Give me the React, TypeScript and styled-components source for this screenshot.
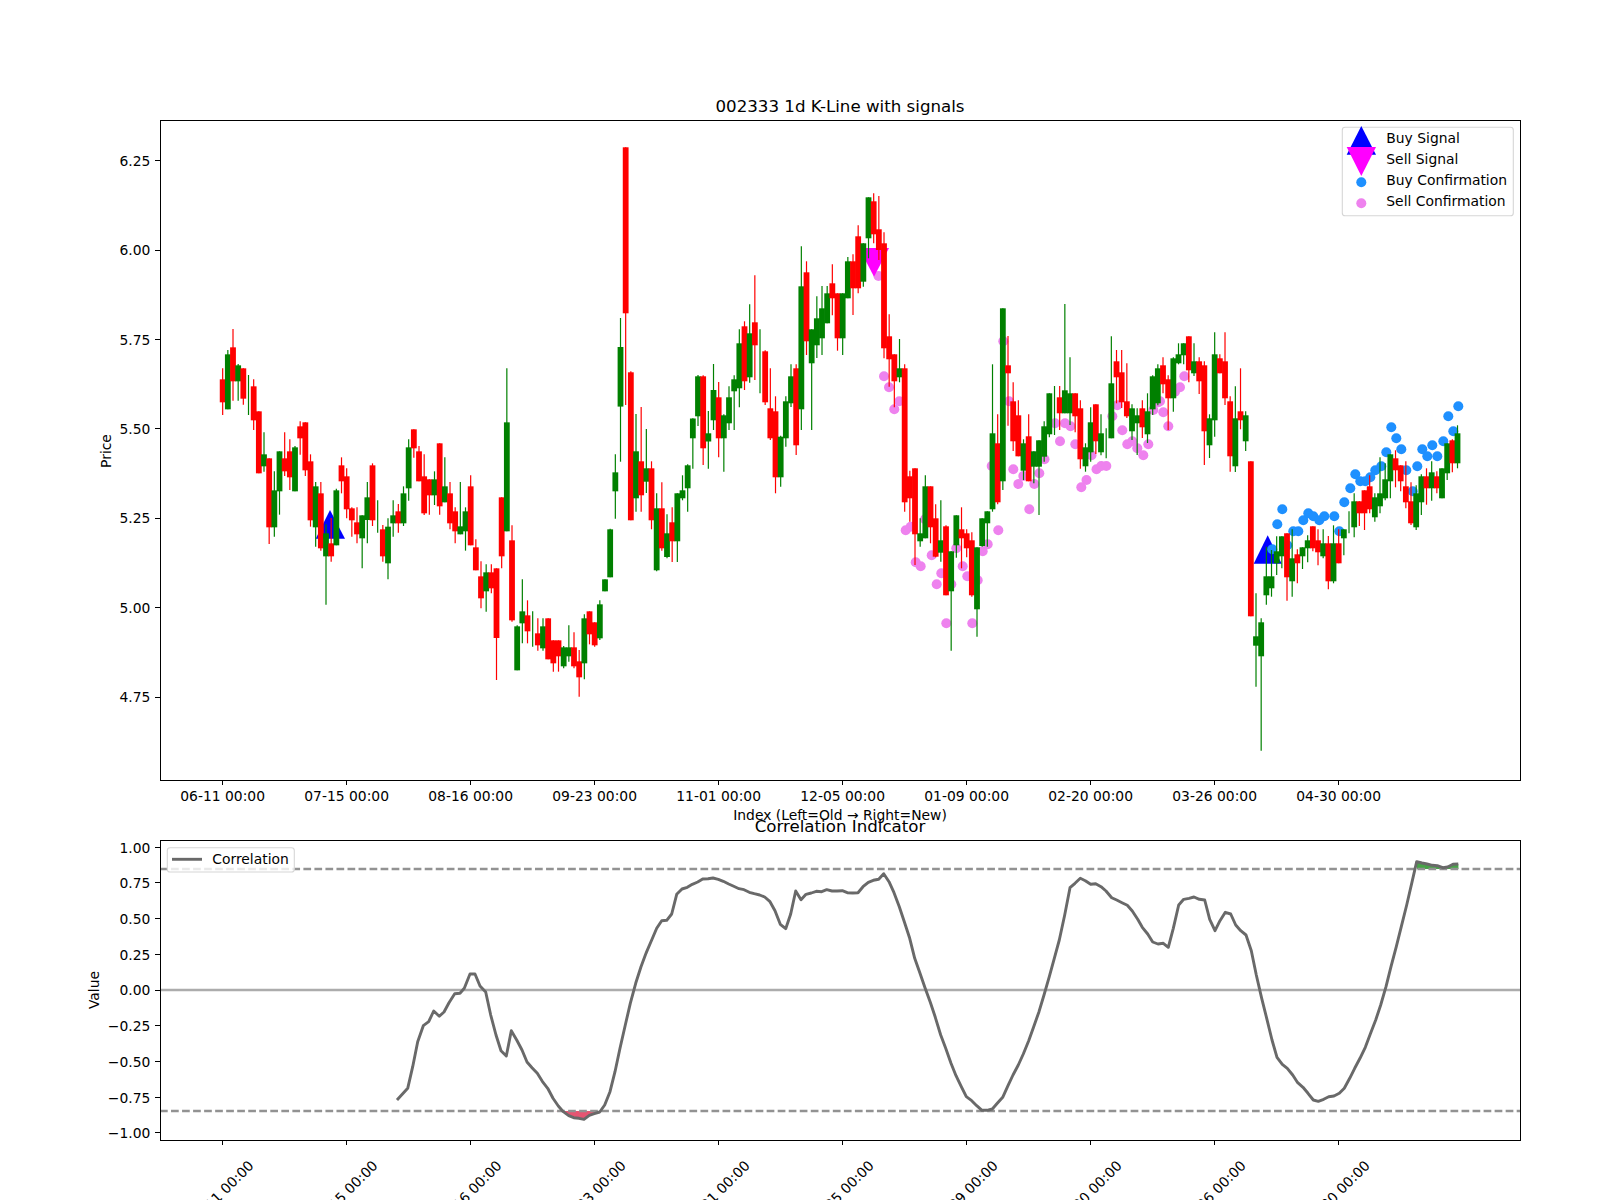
import styled, { createGlobalStyle } from "styled-components";

type Pt = [number, number];
type Row = ["r" | "g", number, number, number, number];

// everything below is in figure pixels (1600x1200)
const AX = { left: 160, right: 1520, top: 120, bottom: 780 };
const BX = { left: 160, right: 1520, top: 840, bottom: 1140 };
const xAt = (i: number) => 222.67 + 5.1667 * i;
const priceY = (p: number) => 697 - (p - 4.75) * 357.5;
const corrY = (v: number) => 990 - v * 142.9;
const snap = (n: number) => Math.floor(n) + 0.5;

const DATES = ["06-11", "07-15", "08-16", "09-23", "11-01", "12-05", "01-09", "02-20", "03-26", "04-30"];
const TICK_X = DATES.map((_, i) => xAt(i * 24));

// rows read at 3x, [colour, body top, body bottom, wick top, wick bottom]
const at3x = (base: number, rows: Row[]): Row[] =>
  rows.map(([c, a, b, d, e]) => [c, base + a / 3, base + b / 3, base + d / 3, base + e / 3]);
const crop = (ox: number, oy: number, pts: Pt[]): Pt[] => pts.map(([x, y]) => [ox + x / 3, oy + y / 3]);

const CANDLES: Row[] = [
  ...at3x(300, [
    ["r", 238, 307, 205, 345], ["g", 163, 328, 150, 328], ["r", 142, 244, 87, 302], ["g", 196, 244, 192, 302],
    ["r", 205, 296, 205, 314], ["g", 270, 270, 225, 345], ["r", 259, 361, 238, 390], ["r", 334, 520, 334, 520],
    ["g", 463, 499, 397, 515], ["r", 475, 682, 475, 732], ["g", 571, 682, 514, 710], ["g", 454, 574, 454, 644],
    ["r", 475, 514, 397, 528], ["r", 454, 532, 418, 570], ["g", 442, 574, 438, 574], ["r", 379, 415, 364, 464],
    ["r", 367, 511, 367, 528], ["r", 484, 661, 463, 680], ["g", 559, 682, 546, 740], ["r", 580, 745, 546, 752],
    ["g", 700, 769, 673, 914], ["r", 730, 769, 654, 785], ["g", 571, 736, 566, 736], ["r", 496, 544, 472, 580],
    ["r", 529, 628, 505, 655], ["r", 625, 661, 622, 710], ["r", 667, 703, 622, 730], ["g", 646, 715, 646, 805],
    ["g", 592, 660, 546, 730], ["r", 496, 661, 490, 678], ["g", 650, 650, 601, 698], ["r", 688, 769, 675, 785],
    ["g", 680, 790, 655, 838], ["g", 646, 670, 601, 710], ["r", 634, 670, 612, 698], ["g", 580, 670, 559, 678],
    ["g", 442, 565, 418, 602], ["r", 388, 445, 388, 473], ["r", 454, 544, 438, 544], ["r", 529, 640, 463, 645],
    ["r", 538, 586, 538, 644], ["g", 538, 586, 514, 615], ["r", 430, 619, 430, 644], ["g", 559, 607, 472, 607],
    ["r", 580, 670, 546, 688], ["r", 634, 694, 622, 730], ["g", 679, 703, 546, 703], ["g", 634, 694, 622, 752],
    ["r", 559, 736, 526, 736], ["r", 742, 811, 718, 811], ["r", 829, 895, 784, 925], ["g", 817, 874, 793, 935],
    ["r", 817, 865, 793, 880], ["r", 805, 1014, 805, 1140], ["r", 592, 769, 592, 805], ["g", 367, 694, 205, 694],
  ]),
  ...at3x(400, [
    ["r", 421, 661, 376, 665], ["g", 679, 811, 676, 811], ["g", 634, 670, 538, 730], ["r", 646, 694, 601, 730],
    ["g", 685, 685, 634, 740], ["r", 700, 736, 655, 752], ["g", 679, 745, 655, 752], ["r", 655, 778, 655, 778],
    ["r", 721, 790, 721, 815], ["r", 721, 769, 721, 815], ["g", 742, 799, 738, 805], ["g", 742, 769, 676, 785],
    ["r", 742, 799, 697, 805], ["r", 784, 832, 750, 890], ["g", 655, 790, 643, 838], ["r", 634, 703, 634, 733],
    ["r", 667, 736, 667, 740], ["g", 613, 715, 601, 720], ["g", 538, 574, 538, 574], ["g", 388, 532, 386, 532],
    ["g", 217, 274, 163, 356],
  ]),
  ["g", 347, 406.6, 318, 461.7], ["r", 147.3, 313.3, 147.3, 405], ["r", 372.3, 520.3, 371.3, 520.3],
  ["g", 451.3, 498.3, 414, 511.7], ["r", 461.3, 495.3, 407, 511.7], ["g", 468.3, 481.7, 429, 493],
  ["r", 468.3, 520.3, 461.3, 529.3], ["g", 508.3, 570.3, 493.3, 571.3], ["r", 508.3, 548.3, 482.3, 550.7],
  ["g", 533.3, 557, 514.3, 558.3], ["r", 522.3, 541.3, 507.3, 562], ["g", 493.3, 541.3, 493.3, 562],
  ["g", 490.3, 498.3, 475.3, 500.3], ["g", 465.3, 488.3, 464.3, 511.7], ["g", 418.5, 438.3, 418.3, 468.7],
  ["g", 376.3, 416.3, 375, 426], ["r", 376.3, 448.3, 375.3, 465], ["g", 433.3, 441.5, 411, 468.7],
  ["g", 390, 420.3, 364, 430], ["r", 397.3, 438.3, 382, 457.3], ["g", 415.3, 438.3, 414.3, 471.7],
  ["g", 397.3, 423.3, 386.3, 430], ["g", 379.3, 391.3, 375.3, 430], ["g", 343.3, 388.3, 329.3, 407.3],
  ["r", 326.3, 381.3, 321.3, 390], ["g", 333.3, 377.3, 304.3, 382.7], ["r", 322.3, 345.3, 275.3, 380],
  ["g", 360, 360, 329.3, 393.3], ["r", 351.3, 402.3, 350.3, 405], ["r", 408.3, 438.3, 368.3, 440],
  ["r", 411.3, 477.3, 396.3, 493.3], ["g", 436.7, 477.3, 435.7, 486.7], ["g", 401.3, 438.3, 396.3, 446.7],
  ["g", 376.3, 403.3, 364.3, 407], ["r", 368.3, 445.3, 364.3, 455], ["g", 286.3, 409.3, 246.3, 430],
  ["r", 272.3, 341.3, 261.3, 355], ["g", 329.3, 363.3, 329.3, 430], ["g", 318.3, 345.3, 296.3, 358],
  ["g", 308.3, 338.3, 286, 355], ["g", 293.3, 323.3, 286, 323.3], ["r", 283.3, 298.3, 264.3, 315.3],
  ["r", 293.3, 338.3, 293.3, 350.7], ["g", 293.3, 338.3, 293.3, 355], ["g", 261.3, 298.3, 257, 298.3],
  ["r", 261.3, 288.3, 254.3, 315], ["r", 236.3, 288.3, 225.3, 293.3], ["g", 243.3, 281.7, 243.3, 286.7],
  ["g", 197.3, 238.3, 197.3, 258.3], ["r", 201.3, 234.3, 193.3, 243.3], ["r", 229.3, 250, 196, 260],
  ["r", 243.3, 348.3, 232.3, 358.3], ["r", 336.3, 359.3, 314.3, 386.7], ["r", 354.3, 381.3, 354.3, 407.3],
  ["g", 368.3, 377.3, 339, 382.3], ["r", 368.3, 502.3, 364.3, 511.7], ["r", 476.3, 498.3, 470.7, 521.7],
  ["r", 468.3, 534.3, 468.3, 565], ["g", 533.3, 541.3, 518.3, 546.7], ["g", 486.3, 538.3, 475.3, 538.3],
  ["r", 486.3, 527.3, 486.3, 543.3], ["r", 518.3, 556.7, 504.3, 557.3], ["g", 540.3, 552.7, 500.3, 561.7],
  ["r", 526.3, 595.3, 525.3, 595.3], ["g", 551.3, 591.3, 551.3, 650.7], ["g", 515.3, 545.3, 515.3, 557.7],
  ["r", 529.3, 538.3, 507.3, 568.3], ["r", 533.3, 548.3, 529.3, 557.3], ["r", 540.3, 595.3, 532.3, 596.7],
  ["g", 547.3, 609.3, 547.3, 636.7], ["g", 518.3, 546, 518.3, 546.7], ["g", 511.3, 523.3, 511.3, 546.7],
  ["g", 433.3, 509.3, 364.3, 511.7], ["r", 443.3, 502.3, 414.3, 504.3], ["g", 308.3, 481.3, 308.3, 490],
  ["r", 365.3, 373.3, 336, 425.7], ["r", 401.3, 441.3, 382.3, 451], ["r", 415.3, 456.3, 400.3, 456.3],
  ["g", 443.3, 470.7, 439.3, 480], ["r", 436.3, 481.3, 414.3, 481.3], ["g", 451.3, 466.7, 451.3, 483.3],
  ["g", 440.3, 466.7, 440.3, 515], ["g", 426.3, 456.7, 421.3, 461.7], ["g", 393.3, 434.3, 393.3, 437.3],
  ["g", 410, 410, 386, 435], ["r", 397.3, 413.3, 386, 430], ["g", 390.3, 413.3, 304, 413.3],
  ["g", 393.3, 413.3, 357.3, 425], ["r", 393.3, 416.3, 393.3, 432.3], ["r", 408.3, 459.3, 400.3, 468.7],
  ["g", 447.3, 466.3, 443.3, 471.7], ["g", 422.3, 452.3, 407.3, 461.7], ["r", 404.3, 441.3, 404.3, 454],
  ["g", 433.3, 452.3, 414.3, 455.3], ["g", 440, 440, 428.3, 458.3], ["g", 383.3, 438.3, 336.3, 438.3],
  ["r", 361.3, 377.3, 350, 403.3], ["r", 372.3, 402.3, 350, 408], ["r", 401.3, 416.3, 363.3, 418],
  ["g", 408.3, 431.3, 404.3, 440], ["g", 415.3, 423.3, 408.3, 455], ["r", 408.3, 427.3, 400.3, 438],
  ["g", 411.3, 434.3, 393.3, 443], ["g", 376.3, 409.3, 375.3, 415], ["g", 368.3, 403.3, 364.3, 405.3],
  ["r", 365.3, 384.3, 357.3, 393.3], ["r", 379.3, 398.3, 375.3, 430], ["g", 358.3, 398.3, 357.3, 411.7],
  ["g", 354.3, 363.3, 343.3, 364.3], ["g", 343.3, 355.3, 343.3, 364.3], ["r", 336.3, 370.3, 336.3, 382.3],
  ["g", 361.3, 373.3, 343.3, 376], ["r", 361.3, 381.3, 357.3, 394], ["r", 365.3, 431.3, 361.3, 465],
  ["g", 418.3, 445.3, 414.3, 458], ["g", 354.3, 420.3, 332.3, 436.7], ["r", 358.3, 373.3, 354.3, 373.3],
  ["r", 361.3, 398.3, 332.3, 405], ["r", 401.3, 456.3, 396.3, 471.7], ["g", 418.3, 466.3, 386.3, 472],
  ["r", 411.3, 420.3, 368.3, 429.3], ["g", 415.3, 441.3, 411.3, 451], ["r", 461.3, 616.3, 461.3, 616.3],
  ["g", 636.3, 645.7, 593.3, 686.7], ["g", 622.3, 656.3, 618.3, 750.7], ["g", 576.3, 595.3, 546.7, 604.7],
  ["g", 576.3, 588.3, 550, 596.7], ["g", 551.3, 563.3, 536.3, 575], ["g", 536.3, 556.3, 536.3, 568.3],
  ["r", 533.3, 577.3, 533.3, 600.7], ["g", 558.3, 581.3, 529.3, 596.7], ["r", 554.3, 563.3, 549.3, 583.3],
  ["g", 547.3, 556.3, 547.3, 569], ["g", 540.3, 548.3, 535.3, 562.3], ["r", 526.3, 548.3, 526.3, 551.3],
  ["r", 540.3, 552.3, 529.3, 565.3], ["g", 543.3, 556.3, 529.3, 558.3], ["r", 543.3, 581.3, 536, 589.3],
  ["g", 543.3, 581.3, 525.3, 583.3], ["r", 543.3, 563.3, 529.3, 563.3], ["g", 529.3, 538.3, 529.3, 555.3],
  ["g", 522, 522, 511.3, 533.3], ["g", 501.3, 527.3, 493.3, 537.3], ["r", 501.3, 513.3, 501.3, 526],
  ["r", 490.3, 513.3, 490.3, 530], ["r", 486.3, 509.3, 475.3, 513.3], ["g", 497.3, 517.3, 493.3, 521.7],
  ["g", 493.3, 506.3, 457.3, 513.3], ["g", 479.3, 498.3, 463.3, 500.3], ["g", 454.3, 481.3, 454.3, 498.3],
  ["r", 458.3, 470.3, 450.3, 487.3], ["r", 465.3, 481.3, 465.3, 491.3], ["r", 486.3, 502.3, 461.3, 508.3],
  ["r", 501.3, 523.3, 482.3, 525], ["g", 493.3, 527.3, 485.3, 530], ["g", 476.3, 502.3, 474.3, 515],
  ["r", 476.3, 488.3, 468.3, 504.7], ["g", 472.3, 488.3, 461.3, 500.7], ["r", 476.3, 488.3, 471.3, 493.3],
  ["g", 468.3, 498.3, 468.3, 498.3], ["g", 443.3, 473.3, 443.3, 480], ["r", 440.3, 463.3, 439.3, 472.3],
  ["g", 433.3, 463.3, 425.3, 468.3],
];

const SELL_DOTS: Pt[] = [
  [884, 376.3], [889, 387.3], [894.3, 409.3], [899.3, 401.3], [878.5, 276], [905.7, 530.3], [910.7, 526.7],
  [915.7, 562.3], [920.7, 566.3], [925, 519.3], [931.7, 555.3], [936.7, 584.3], [941.3, 573.3], [946.3, 623.3],
  [951.3, 584.3], [956.3, 548.3], [962.7, 566.3], [967.3, 576.3], [972.3, 623.3], [977.7, 580.3], [982.7, 551.3],
  [987.7, 544.3], [991.7, 466], [998.3, 530.3], [1003.3, 341.3], [1009, 401.3], [1013.3, 469.3], [1018.3, 484],
  [1023.3, 476], [1029.3, 509.3], [1034.3, 484], [1039.3, 473.3], [1044.5, 459.3], [1055, 423.3], [1060, 441.3],
  [1065, 423.3], [1070.5, 426.3], [1075.3, 444.3], [1081.3, 487.3], [1086.5, 480], [1091.5, 455.3], [1096.5, 469.3],
  [1101.3, 466], [1106.3, 466], [1112.3, 416.3], [1117.3, 405.3], [1122.3, 430.3], [1127.3, 444.3], [1132.3, 441.3],
  [1137.3, 448.3], [1143.3, 455.3], [1148.3, 444.3], [1153.3, 410], [1158.3, 402.3], [1160, 401.3], [1163.3, 412.3],
  [1168.3, 426.3], [1175, 391.7], [1180, 387.3], [1184.3, 376.3],
];

const BUY_DOTS: Pt[] = [
  [1272.3, 549.3], [1277.3, 524.3], [1282.3, 509.3], [1287.3, 545.3], [1293.3, 531.3], [1298.3, 531.3],
  [1303.3, 520.3], [1308.3, 513.3], [1313.3, 516.3], [1319.3, 520.3], [1324.3, 516.3], [1334.3, 516.3],
  [1339.3, 531.3], [1344.3, 502.3], [1350.3, 488.3], [1355.3, 474.3], [1360.3, 481.3], [1365.3, 481.3],
  [1370.3, 477.3], [1375.3, 470.3], [1381.3, 466.3], [1386.3, 452.3], [1391.3, 427.3], [1396.3, 438.3],
  [1401.3, 449.3], [1406.3, 470.3], [1412.7, 491.3], [1417.3, 466.3], [1422.3, 449.3], [1427.3, 456.3],
  [1432.3, 445.3], [1437.3, 456.3], [1443.3, 441.3], [1448.3, 416.3], [1453.3, 431.3], [1458.3, 406.3],
];

const CORR_LINE: Pt[] = [
  ...crop(150, 770, [
    [741, 990], [773, 955], [788, 890], [803, 815], [820, 767], [836, 755], [851, 723], [868, 739], [882, 726],
    [897, 698], [914, 671], [930, 670], [943, 655], [960, 612], [975, 612], [990, 648], [1007, 666], [1022, 735],
    [1038, 795], [1053, 842], [1069, 858], [1084, 782], [1100, 810], [1116, 840], [1131, 876], [1146, 893],
    [1162, 910], [1177, 934], [1193, 955], [1209, 985], [1225, 1008], [1240, 1025], [1256, 1037], [1271, 1043],
    [1287, 1045], [1302, 1048], [1318, 1036], [1333, 1031], [1349, 1026], [1364, 1005], [1380, 965], [1395, 905],
    [1410, 835], [1426, 765], [1441, 700], [1457, 640], [1473, 590], [1488, 550],
  ]),
  ...crop(640, 800, [
    [20, 455], [35, 420], [50, 385], [65, 362], [80, 361], [95, 342], [110, 283], [126, 267], [142, 262], [157, 253],
    [173, 246], [188, 237], [204, 236], [219, 234], [235, 238], [250, 244], [266, 252], [281, 259], [297, 266],
    [312, 269], [328, 277], [343, 281], [359, 285], [374, 291], [390, 305], [405, 332], [421, 373], [437, 386],
    [452, 342], [467, 273], [483, 299], [498, 283], [514, 279], [529, 274], [545, 275], [560, 269], [576, 273],
    [591, 273], [607, 272], [622, 278], [638, 279], [654, 278], [669, 260], [685, 247], [700, 241], [716, 238],
    [731, 221], [747, 245], [762, 278], [778, 320], [793, 365], [809, 415], [824, 475], [840, 520], [855, 563],
    [871, 607], [886, 652], [902, 705], [917, 745], [933, 790], [948, 827], [964, 860], [979, 890], [995, 902],
    [1010, 917], [1026, 931], [1041, 931], [1057, 927], [1072, 910], [1088, 892], [1104, 857], [1119, 825],
    [1135, 795], [1150, 762], [1166, 722], [1181, 680], [1197, 635], [1212, 585], [1228, 530], [1243, 475],
    [1258, 420], [1274, 345], [1290, 263], [1305, 250], [1321, 235], [1336, 242], [1352, 253], [1367, 251],
    [1383, 260],
  ]),
  ...crop(1100, 830, [
    [18, 183], [35, 203], [50, 210], [66, 218], [82, 226], [97, 243], [113, 268], [127, 292], [143, 312], [158, 336],
    [174, 342], [190, 340], [205, 352], [220, 295], [236, 225], [251, 208], [267, 205], [282, 201], [298, 208],
    [314, 210], [329, 268], [345, 302], [360, 272], [376, 247], [392, 252], [407, 285], [422, 302], [438, 315],
    [454, 362], [469, 435], [485, 505], [500, 565], [516, 630], [531, 682], [547, 703], [562, 715], [578, 735],
    [593, 758], [609, 772], [624, 790], [640, 810], [655, 814], [671, 808], [686, 800], [702, 798], [718, 790],
    [733, 775], [749, 745], [764, 715], [780, 685], [796, 652], [811, 612], [827, 570], [842, 525], [858, 470],
    [873, 410], [889, 350], [904, 290], [920, 225], [935, 160], [950, 95], [966, 99], [981, 102], [997, 106],
    [1012, 107], [1028, 113], [1043, 111], [1059, 103], [1075, 102],
  ]),
];

const points = (pts: Pt[]) => pts.map(([x, y]) => `${x.toFixed(1)},${y.toFixed(1)}`).join(" ");

const UPPER_Y = 869;
const LOWER_Y = 1111;
const OVERSOLD = CORR_LINE.filter(([x, y]) => y > LOWER_Y && x > 500 && x < 620);
const OVERBOUGHT = CORR_LINE.filter(([x, y]) => y < UPPER_Y && x > 1400);

const GlobalStyle = createGlobalStyle`
  html, body {
    margin: 0;
    background: #fff;
  }
`;

const Figure = styled.div`
  display: grid;
  grid-template-rows: 822px 378px;
  width: 1600px;
  height: 1200px;
  overflow: hidden;
  background: #fff;
`;

const PlotSvg = styled.svg`
  display: block;
  width: 1600px;
  height: 100%;
  overflow: visible;
`;

const Label = styled.text<{ $size?: number }>`
  font-family: "DejaVu Sans", "Liberation Sans", sans-serif;
  font-size: ${(p) => p.$size ?? 13.89}px;
  fill: #000;
`;

const Spine = styled.rect`
  fill: none;
  stroke: #000;
  stroke-width: 1;
  shape-rendering: crispEdges;
`;

const Tick = styled.line`
  stroke: #000;
  stroke-width: 1;
  shape-rendering: crispEdges;
`;

const Wick = styled.line<{ $up: boolean }>`
  stroke: ${(p) => (p.$up ? "#ff0000" : "#008000")};
  stroke-width: 1.2;
`;

const Body = styled.rect<{ $up: boolean }>`
  fill: ${(p) => (p.$up ? "#ff0000" : "#008000")};
`;

const Dot = styled.circle<{ $buy?: boolean }>`
  fill: ${(p) => (p.$buy ? "#1e90ff" : "#ee82ee")};
`;

const Marker = styled.polygon<{ $buy?: boolean }>`
  fill: ${(p) => (p.$buy ? "#0000ff" : "#ff00ff")};
`;

const LegendBox = styled.rect`
  fill: #fff;
  fill-opacity: 0.8;
  stroke: #d6d6d6;
  stroke-width: 1.11;
`;

const CorrLine = styled.polyline`
  fill: none;
  stroke: #696969;
  stroke-width: 2.9;
  stroke-linejoin: round;
`;

const ZeroLine = styled.line`
  stroke: #acacac;
  stroke-width: 2.3;
`;

const LevelLine = styled.line`
  stroke: #929292;
  stroke-width: 2.3;
  stroke-dasharray: 7.7 3.33;
`;

const ZoneFill = styled.polygon<{ $color: string }>`
  fill: ${(p) => p.$color};
  fill-opacity: 0.72;
`;

function KLineChart() {
  return (
    <PlotSvg viewBox="0 0 1600 822">
      <Label $size={16.67} x={840} y={111.7} textAnchor="middle">
        002333 1d K-Line with signals
      </Label>

      {SELL_DOTS.map(([x, y], i) => (
        <Dot key={i} cx={x} cy={y} r={5} />
      ))}
      <Marker points="859,248 889,248 874,276.7" />
      <Marker $buy points="330,510 315.7,538.7 345,538.7" />
      <Marker $buy points="1267.7,535.3 1253.7,563.7 1281.7,563.7" />
      {BUY_DOTS.map(([x, y], i) => (
        <Dot key={i} $buy cx={x} cy={y} r={5} />
      ))}

      {CANDLES.map(([c, top, bottom, wickTop, wickBottom], i) => (
        <g key={i}>
          <Wick $up={c === "r"} x1={xAt(i)} x2={xAt(i)} y1={wickTop} y2={wickBottom} />
          {bottom > top && <Body $up={c === "r"} x={xAt(i) - 2.9} width={5.8} y={top} height={bottom - top} />}
        </g>
      ))}

      <Spine x={AX.left + 0.5} y={AX.top + 0.5} width={AX.right - AX.left} height={AX.bottom - AX.top} />

      {[6.25, 6, 5.75, 5.5, 5.25, 5, 4.75].map((p) => (
        <g key={p}>
          <Tick x1={155.1} x2={AX.left} y1={snap(priceY(p))} y2={snap(priceY(p))} />
          <Label x={150.3} y={priceY(p) + 5.2} textAnchor="end">
            {p.toFixed(2)}
          </Label>
        </g>
      ))}
      <Label x={110.5} y={451} textAnchor="middle" transform="rotate(-90 110.5 451)">
        Price
      </Label>

      {TICK_X.map((x, i) => (
        <g key={x}>
          <Tick x1={snap(x)} x2={snap(x)} y1={AX.bottom} y2={785} />
          <Label x={x} y={800.7} textAnchor="middle">
            {DATES[i]} 00:00
          </Label>
        </g>
      ))}
      <Label x={840} y={820} textAnchor="middle">
        Index (Left=Old → Right=New)
      </Label>

      <LegendBox x={1342.3} y={127.3} width={171} height={88.4} rx={2.8} />
      <Marker $buy points="1361.3,126 1346.7,154.7 1376,154.7" />
      <Marker points="1346.7,147 1376,147 1361.3,176" />
      <Dot $buy cx={1361.3} cy={182.3} r={5} />
      <Dot cx={1361.3} cy={203.3} r={5} />
      <Label x={1386.3} y={143.3}>Buy Signal</Label>
      <Label x={1386.3} y={164.3}>Sell Signal</Label>
      <Label x={1386.3} y={185.3}>Buy Confirmation</Label>
      <Label x={1386.3} y={206.3}>Sell Confirmation</Label>
    </PlotSvg>
  );
}

function CorrelationChart() {
  return (
    <PlotSvg viewBox="0 822 1600 378">
      <Label $size={16.67} x={840} y={831.7} textAnchor="middle">
        Correlation Indicator
      </Label>

      <ZoneFill $color="#dc143c" points={points([[555, LOWER_Y], ...OVERSOLD, [600, LOWER_Y]])} />
      <ZoneFill $color="#008000" points={points([[1417, UPPER_Y], ...OVERBOUGHT, [1458.5, UPPER_Y]])} />

      <ZeroLine x1={BX.left} x2={BX.right} y1={corrY(0)} y2={corrY(0)} />
      <LevelLine x1={BX.left} x2={BX.right} y1={UPPER_Y} y2={UPPER_Y} />
      <LevelLine x1={BX.left} x2={BX.right} y1={LOWER_Y} y2={LOWER_Y} />
      <CorrLine points={points(CORR_LINE)} />

      <Spine x={BX.left + 0.5} y={BX.top + 0.5} width={BX.right - BX.left} height={BX.bottom - BX.top} />

      {[1, 0.75, 0.5, 0.25, 0, -0.25, -0.5, -0.75, -1].map((v) => (
        <g key={v}>
          <Tick x1={155.1} x2={BX.left} y1={snap(corrY(v))} y2={snap(corrY(v))} />
          <Label x={150.3} y={corrY(v) + 5.4} textAnchor="end">
            {v < 0 ? `−${(-v).toFixed(2)}` : v.toFixed(2)}
          </Label>
        </g>
      ))}
      <Label x={99} y={990} textAnchor="middle" transform="rotate(-90 99 990)">
        Value
      </Label>

      {TICK_X.map((x, i) => (
        <g key={x}>
          <Tick x1={snap(x)} x2={snap(x)} y1={BX.bottom} y2={1145} />
          <Label x={x + 2} y={1196.5} textAnchor="middle" transform={`rotate(-45 ${x + 2} 1196.5)`}>
            {DATES[i]} 00:00
          </Label>
        </g>
      ))}

      <LegendBox x={167.3} y={847.7} width={127} height={24.3} rx={2.8} />
      <CorrLine points="172,859.3 202,859.3" />
      <Label x={212.3} y={864}>Correlation</Label>
    </PlotSvg>
  );
}

export default function App() {
  return (
    <Figure>
      <GlobalStyle />
      <KLineChart />
      <CorrelationChart />
    </Figure>
  );
}
